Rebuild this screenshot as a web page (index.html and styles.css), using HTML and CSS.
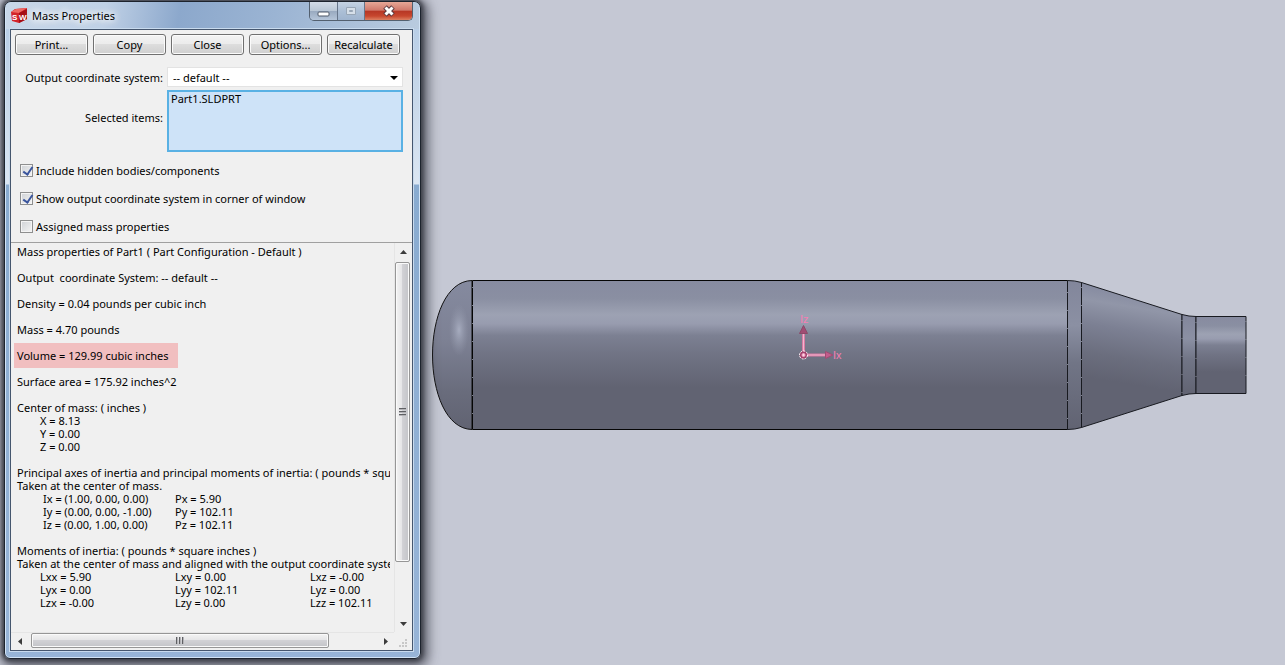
FILE: index.html
```html
<!DOCTYPE html>
<html lang="en">
<head>
<meta charset="utf-8">
<title>Mass Properties</title>
<link rel="stylesheet" href="styles.css">
</head>
<body>
<div class="workspace">
  <section class="window" aria-label="Mass Properties">
    <header class="titlebar">
      <svg class="app-icon" width="16" height="16" viewBox="0 0 16 16" aria-hidden="true">
        <path d="M0 4 4 1 16 0 16 11 8 15 1 13Z" fill="#d3232a"/>
        <path d="M0 4 5 1 16 0 8 5Z" fill="#ee6a64"/>
        <path d="M8 5 16 1V11L8 15Z" fill="#a50d14"/>
        <text x="1" y="12" class="logo-text">S</text>
        <text x="8" y="12" class="logo-text">W</text>
      </svg>
      <h1 class="title">Mass Properties</h1>
      <div class="controls">
        <button class="ctl ctl-min" aria-label="Minimize"><svg width="13" height="6" viewBox="0 0 13 6"><rect x="1" y="1" width="11" height="4" rx="1" fill="#fff" stroke="#4f5968"/></svg></button>
        <button class="ctl ctl-max" aria-label="Maximize" disabled><svg width="12" height="10" viewBox="0 0 12 10"><path d="M1.500 1.500H10.500V8.500H1.500Z" fill="#d6dfe9" stroke="#98a6b6"/><path d="M4.500 4.500H7.500V5.500H4.500Z" fill="#b3c3d6" stroke="#98a6b6"/></svg></button>
        <button class="ctl ctl-close" aria-label="Close window"><svg width="14" height="12" viewBox="0 0 14 12"><path d="M3 2 11 10M11 2 3 10" stroke="#5b3a40" stroke-width="5"/><path d="M3.500 2.500 10.500 9.500M10.500 2.500 3.500 9.500" stroke="#fff" stroke-width="3"/></svg></button>
      </div>
    </header>

    <div class="panel">
      <div class="toolbar">
        <button class="btn">Print...</button>
        <button class="btn">Copy</button>
        <button class="btn">Close</button>
        <button class="btn">Options...</button>
        <button class="btn">Recalculate</button>
      </div>

      <div class="fields">
        <label for="coord">Output coordinate system:</label>
        <div class="select-wrap">
          <select id="coord" class="select"><option>-- default --</option></select>
          <svg class="select-arrow" width="8" height="4" viewBox="0 0 8 4" aria-hidden="true"><path d="M0 0H8L4 4Z"/></svg>
        </div>
        <label for="items">Selected items:</label>
        <textarea id="items" class="items">Part1.SLDPRT</textarea>
      </div>

      <div class="checks">
        <label class="check"><input type="checkbox" checked>Include hidden bodies/components</label>
        <label class="check"><input type="checkbox" checked>Show output coordinate system in corner of window</label>
        <label class="check"><input type="checkbox">Assigned mass properties</label>
      </div>

      <div class="results">
        <div class="report">
          <p>Mass properties of Part1 ( Part Configuration - Default )</p>
          <p>Output&nbsp; coordinate System: -- default --</p>
          <p>Density = 0.04 pounds per cubic inch</p>
          <p>Mass = 4.70 pounds</p>
          <p class="highlight">Volume = 129.99 cubic inches</p>
          <p>Surface area = 175.92 inches^2</p>
          <div class="block">
            <p>Center of mass: ( inches )</p>
            <ul class="coords"><li>X = 8.13</li><li>Y = 0.00</li><li>Z = 0.00</li></ul>
          </div>
          <div class="block">
            <p>Principal axes of inertia and principal moments of inertia: ( pounds * square inches )</p>
            <p>Taken at the center of mass.</p>
            <table class="grid axes">
              <tr><td>Ix = (1.00, 0.00, 0.00)</td><td>Px = 5.90</td></tr>
              <tr><td>Iy = (0.00, 0.00, -1.00)</td><td>Py = 102.11</td></tr>
              <tr><td>Iz = (0.00, 1.00, 0.00)</td><td>Pz = 102.11</td></tr>
            </table>
          </div>
          <div class="block">
            <p>Moments of inertia: ( pounds * square inches )</p>
            <p>Taken at the center of mass and aligned with the output coordinate system.</p>
            <table class="grid moments">
              <tr><td>Lxx = 5.90</td><td>Lxy = 0.00</td><td>Lxz = -0.00</td></tr>
              <tr><td>Lyx = 0.00</td><td>Lyy = 102.11</td><td>Lyz = 0.00</td></tr>
              <tr><td>Lzx = -0.00</td><td>Lzy = 0.00</td><td>Lzz = 102.11</td></tr>
            </table>
          </div>
        </div>
        <div class="vscroll">
          <button class="arrow" aria-label="Scroll up"><svg width="7" height="4" viewBox="0 0 7 4"><path d="M0 4H7L3.500 0Z"/></svg></button>
          <div class="track"><div class="thumb"><i></i><i></i><i></i></div></div>
          <button class="arrow" aria-label="Scroll down"><svg width="7" height="4" viewBox="0 0 7 4"><path d="M0 0H7L3.500 4Z"/></svg></button>
        </div>
        <div class="hscroll">
          <button class="arrow" aria-label="Scroll left"><svg width="4" height="7" viewBox="0 0 4 7"><path d="M4 0V7L0 3.500Z"/></svg></button>
          <div class="track"><div class="thumb"><i></i><i></i><i></i></div></div>
          <button class="arrow" aria-label="Scroll right"><svg width="4" height="7" viewBox="0 0 4 7"><path d="M0 0V7L4 3.500Z"/></svg></button>
        </div>
        <svg class="grip" width="8" height="8" viewBox="0 0 8 8" aria-hidden="true"><path d="M6 0h2v2H6zM3 3h2v2H3zM6 3h2v2H6zM0 6h2v2H0zM3 6h2v2H3zM6 6h2v2H6z" fill="#c8c8c8"/></svg>
      </div>
    </div>
  </section>

  <main class="viewport">
    <svg class="model" viewBox="428 0 857 665" role="img" aria-label="Cylinder part, side view">
      <defs>
        <linearGradient id="metal" x1="0" y1="0" x2="0" y2="1">
          <stop offset="0" stop-color="#878ba0"/><stop offset=".12" stop-color="#8a8fa2"/>
          <stop offset=".23" stop-color="#9da2b3"/><stop offset=".29" stop-color="#989caf"/>
          <stop offset=".37" stop-color="#7c8092"/><stop offset=".5" stop-color="#707384"/>
          <stop offset=".72" stop-color="#616372"/><stop offset="1" stop-color="#616372"/>
        </linearGradient>
        <linearGradient id="neck" x1="0" y1="0" x2="0" y2="1">
          <stop offset="0" stop-color="#82869b"/><stop offset=".3" stop-color="#8b90a3"/><stop offset=".55" stop-color="#717586"/><stop offset="1" stop-color="#616372"/>
        </linearGradient>
        <linearGradient id="dome" x1="0" y1="0" x2="0" y2="1">
          <stop offset="0" stop-color="#858a9f"/><stop offset=".4" stop-color="#7d8194"/><stop offset=".75" stop-color="#696c7c"/><stop offset="1" stop-color="#616372"/>
        </linearGradient>
        <linearGradient id="cone" gradientUnits="userSpaceOnUse" x1="1140" y1="292" x2="1120" y2="414">
          <stop offset="0" stop-color="#858aa0"/><stop offset=".13" stop-color="#9196a8"/><stop offset=".32" stop-color="#7c8093"/>
          <stop offset=".55" stop-color="#6b6e7e"/><stop offset=".75" stop-color="#616372"/><stop offset="1" stop-color="#616372"/>
        </linearGradient>
        <radialGradient id="glint"><stop offset="0" stop-color="#abb1c4" stop-opacity=".9"/><stop offset="1" stop-color="#9499ac" stop-opacity="0"/></radialGradient>
      </defs>
      <path d="M472 280.500C446 281 432.500 318 432.500 355S446 429 472 429.500Z" fill="url(#dome)" stroke="#111"/>
      <ellipse cx="459" cy="330" rx="10" ry="26" fill="url(#glint)"/>
      <path d="M472.500 280.500H1067.500V429.500H472.500Z" fill="url(#metal)" stroke="#050505"/>
      <path d="M1067.500 280.500Q1075 280.500 1081.500 282.500V427.500Q1075 429.500 1067.500 429.500Z" fill="url(#neck)" stroke="#181a20"/>
      <path d="M1081.500 282.500 1182 314.500V395.500L1081.500 427.500Z" fill="url(#cone)" stroke="#181a20"/>
      <path d="M1182 314.500Q1189 316.500 1196 316.500V393.500Q1189 393.500 1182 395.500Z" fill="url(#neck)" stroke="#181a20"/>
      <path d="M1196 316.500H1246V393.500H1196Z" fill="url(#metal)" stroke="#181a20"/>
      <g stroke="#9ca0ae" stroke-width="1" stroke-dasharray="1 17" opacity=".8">
        <path d="M472.500 287V429M1067.500 292V427M1081.500 287V427M1182 320V394M1196 322V393M1246 321V393"/>
      </g>
      <g fill="#d77ba3" stroke="#d77ba3">
        <path d="M803.500 353V333M806 355H826" stroke-width="3"/>
        <path d="M803.500 353V333M806 355H826" stroke="#f3b4ce" stroke-width="1"/>
        <path d="M799.500 333.500 803.500 325.500 807.500 333.500Z" fill="#a14c73" stroke="#8a4a69"/>
        <path d="M825.500 351.500 833 355 825.500 358.500Z" fill="#c25c8c" stroke="#a14c73"/>
        <circle cx="803.500" cy="355" r="4" fill="#a5426e" stroke="#fff" stroke-dasharray="2 1"/>
        <circle cx="803.500" cy="355" r="1.500" fill="#ffd7e6" stroke="#f4a9c8"/>
      </g>
      <g class="axis-text"><text x="800" y="323">Iz</text><text x="833" y="359">Ix</text></g>
    </svg>
  </main>
</div>
</body>
</html>
```
FILE: styles.css
```css
* { box-sizing: border-box; }
body {
  margin: 0;
  background: #c5c8d4;
  color: #000;
  font-family: "Noto Sans", "Open Sans", sans-serif;
  font-size: 11px;
  line-height: 13px;
}
p, h1, ul { margin: 0; padding: 0; }
button, select, textarea, input { font: inherit; color: inherit; margin: 0; }

.workspace {
  display: grid;
  grid-template-columns: 428px 1fr;
  min-height: 100vh;
}
.viewport { min-width: 0; }
.model { display: block; width: 100%; height: auto; }

.window {
  display: flex;
  flex-direction: column;
  align-self: start;
  position: relative;
  margin: 1px 7px 6px 4px;
  padding: 0 7px 7px 5px;
  border: 1px solid #1d232d;
  border-radius: 7px 7px 6px 6px;
  background: linear-gradient(#b3cbe6 0, #cbdaea 110px, #dbe6f3 182px, #89abd0 183px, #97b4d7 100%);
  box-shadow: inset 0 0 0 1px #d2e3f5, 0 0 4px 2px #3c3f48, 2px 3px 12px 5px rgba(45, 47, 58, .7);
}

.titlebar {
  display: flex;
  align-items: center;
  height: 27px;
  margin: 0 -6px 0 -4px;
  padding: 0 6px 0 5px;
  border-radius: 6px 6px 0 0;
  background: linear-gradient(100deg, #c8d7e8 0, #c0d1e6 24%, #8ca8cc 42%, #9bb4d3 65%, #b9cbdf 100%);
}
.app-icon { flex: none; margin-right: 5px; }
.logo-text { font: bold 8px "Liberation Sans", sans-serif; fill: #fff; }
.title {
  flex: 1;
  font-size: 11px;
  font-weight: 400;
  text-shadow: 0 0 6px #fff, 0 0 8px #fff, 0 0 10px #fff;
}
.controls {
  display: flex;
  align-self: flex-start;
  border: 1px solid #53606f;
  border-top: 0;
  border-radius: 0 0 5px 5px;
  overflow: hidden;
}
.ctl {
  display: flex;
  align-items: center;
  justify-content: center;
  height: 18px;
  padding: 0;
  border: 0;
  border-right: 1px solid #66758a;
  background: linear-gradient(#d3dce7 0, #bac7d6 48%, #98a9bf 50%, #b5c5d9 100%);
}
.ctl-min { width: 28px; padding-top: 5px; }
.ctl-max { width: 27px; background: linear-gradient(#c5d3e3, #acbfd6 50%, #9fb4ce); }
.ctl-close { width: 47px; border-right: 0; background: linear-gradient(#e6a797 0, #d0796b 46%, #b63625 50%, #c7472e 78%, #dc8062 100%); }

.panel {
  border: 1px solid #45566e;
  outline: 1px solid #c9dbee;
  background: #f0f0f0;
}
.toolbar { display: flex; gap: 5px; padding: 4px 4px 0; }
.btn {
  width: 73px;
  height: 21px;
  padding: 0;
  border: 1px solid #707070;
  border-radius: 3px;
  background: linear-gradient(#f3f3f3 0, #ebebeb 49%, #dddddd 50%, #cfcfcf 100%);
  box-shadow: inset 0 0 0 1px #fbfbfb;
}

.fields {
  display: grid;
  grid-template-columns: 152px 1fr;
  gap: 3px 4px;
  align-items: center;
  padding: 12px 9px 0 0;
}
.fields label { text-align: right; }
.fields label[for="items"] { padding-bottom: 7px; }
.select-wrap { position: relative; }
.select {
  display: block;
  width: 100%;
  height: 20px;
  padding: 0 20px 0 5px;
  appearance: none;
  border: 1px solid #e3e3e3;
  border-radius: 0;
  background: #fff;
}
.select-arrow { position: absolute; right: 5px; top: 9px; pointer-events: none; }
.items {
  display: block;
  width: 100%;
  height: 62px;
  padding: 0 2px;
  border: 2px solid #59b1e4;
  background: #cee3f8;
  resize: none;
}

.checks {
  display: flex;
  flex-direction: column;
  gap: 15px;
  padding: 12px 9px 9px;
}
.check { display: flex; align-items: center; gap: 3px; }
.check input {
  width: 13px;
  height: 13px;
  appearance: none;
  border: 1px solid #8e8f8f;
  background: linear-gradient(135deg, #cfd2d6, #f4f4f4);
  box-shadow: inset 0 0 0 1px #f4f4f4;
}
.check input:checked::before {
  content: "";
  display: block;
  width: 4px;
  height: 8px;
  margin: 0 0 0 4px;
  border: solid #3a559d;
  border-width: 0 2px 2px 0;
  transform: rotate(35deg);
}

.results {
  display: grid;
  grid-template-columns: 1fr 17px;
  padding-right: 1px;
  border-top: 1px solid #a0a0a0;
}
.report {
  min-width: 0;
  margin-right: 4px;
  padding: 2px 0 10px 6px;
  overflow: hidden;
  white-space: nowrap;
}
.report > p, .block { margin-bottom: 13px; }
.report > .highlight {
  width: fit-content;
  margin: -6px 0 7px -3px;
  padding: 6px 10px 6px 3px;
  background: #f1bfc0;
}
.coords { padding-left: 23px; list-style: none; }
.grid { border-collapse: collapse; table-layout: fixed; }
.grid td { padding: 0; }
.axes { width: 264px; margin-left: 26px; }
.moments { width: 405px; margin-left: 23px; }

.arrow {
  display: flex;
  align-items: center;
  justify-content: center;
  flex: none;
  width: 17px;
  height: 17px;
  padding: 0;
  border: 0;
  background: none;
}
.arrow svg { fill: #3c3c3c; }
.vscroll, .hscroll { display: flex; background: #f0f0f0; }
.vscroll { flex-direction: column; border-left: 1px solid #e5e5e5; }
.hscroll { border-top: 1px solid #e5e5e5; }
.track { flex: 1; min-width: 0; display: flex; }
.vscroll .track { flex-direction: column; padding-top: 2px; }
.hscroll .track { padding-left: 3px; }
.thumb {
  display: flex;
  align-items: center;
  justify-content: center;
  gap: 1px;
  border: 1px solid #969696;
  border-radius: 2px;
  box-shadow: inset 0 0 0 1px #fafafa;
}
.vscroll .thumb {
  flex-direction: column;
  width: 15px;
  height: 85%;
  background: linear-gradient(90deg, #f3f3f3, #e4e4e6 49%, #d1d1d5 50%, #c3c4c8);
}
.hscroll .thumb {
  width: 86%;
  height: 15px;
  background: linear-gradient(#f3f3f3, #e4e4e6 49%, #d1d1d5 50%, #c3c4c8);
}
.thumb i { background: #5f6064; }
.vscroll i { width: 7px; height: 2px; border-bottom: 1px solid #b4b4b8; }
.hscroll i { width: 2px; height: 7px; border-right: 1px solid #b4b4b8; }
.grip { align-self: end; justify-self: end; margin: 0 4px 3px 0; }

.axis-text { font: 11px "Liberation Sans", sans-serif; fill: #f57fb4; }
```
